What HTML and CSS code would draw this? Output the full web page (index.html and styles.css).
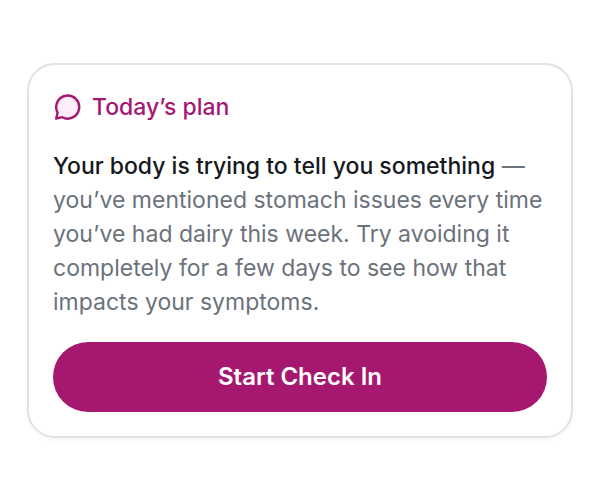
FILE: index.html
```html
<!DOCTYPE html>
<html lang="en">
<head>
<meta charset="utf-8">
<meta name="viewport" content="width=device-width, initial-scale=1">
<title>Today’s plan</title>
<link rel="stylesheet" href="styles.css">
</head>
<body>
<main class="card">
  <h1 class="card-title">
    <svg class="icon" viewBox="0 0 28 28" aria-hidden="true"><path d="M9.2 24.2A11.5 11.5 0 1 0 4.6 19.6L3.2 25.6Z"/></svg>
    Today’s plan
  </h1>
  <p class="message"><strong>Your body is trying to tell you something</strong> — you’ve mentioned stomach issues every time you’ve had dairy this week. Try avoiding it completely for a few days to see how that impacts your symptoms.</p>
  <button class="action" type="button">Start Check In</button>
</main>
</body>
</html>
```

FILE: styles.css
```css
* {
  box-sizing: border-box;
}

body {
  margin: 0;
  min-height: 100vh;
  padding: 0 27px;
  display: flex;
  align-items: center;
  background: #fff;
  font-family: Inter, sans-serif;
}

.card {
  width: 100%;
  padding: 25px 24px 24px;
  border: 2px solid #dfe3e6;
  border-radius: 28px;
  box-shadow: 0 2px 4px rgb(0 0 0 / 4%);
}

.card-title {
  display: flex;
  align-items: center;
  gap: 11px;
  margin: 0 0 25px;
  color: #a61870;
  font-size: 23px;
  font-weight: 500;
  line-height: 34px;
}

.icon {
  width: 28px;
  height: 28px;
  fill: #fdedf8;
  stroke: currentColor;
  stroke-width: 2.4;
  stroke-linecap: round;
  stroke-linejoin: round;
}

.message {
  margin: 0 0 23px;
  color: #6b727b;
  font-size: 23px;
  line-height: 34px;
}

.message strong {
  color: #15191d;
  font-weight: 500;
}

.action {
  display: block;
  width: 100%;
  padding: 18px 24px;
  border: 0;
  border-radius: 36px;
  background: #a61870;
  color: #fff;
  font: 600 24px/34px Inter, sans-serif;
}
```
